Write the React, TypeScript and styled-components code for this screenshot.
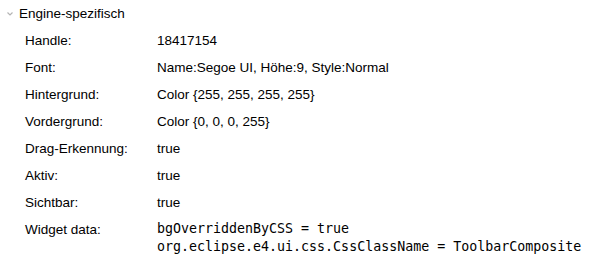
import React from 'react'
import styled, { createGlobalStyle } from 'styled-components'

const GlobalStyle = createGlobalStyle`
  html, body {
    margin: 0;
    padding: 0;
    background: #ffffff;
  }
  body {
    font-family: "Liberation Sans", Arial, sans-serif;
    font-size: 13.5px;
    color: #000000;
  }
`

const Section = styled.div`
  width: 590px;
  height: 263px;
  overflow: hidden;
`

const Header = styled.div`
  display: flex;
  align-items: center;
  height: 27px;
  padding-left: 7px;
  gap: 6px;
`

const Chevron = styled.svg`
  width: 6px;
  height: 4px;
  margin-top: 1px;
`

const Title = styled.span`
  line-height: 27px;
`

const Table = styled.div`
  display: grid;
  grid-template-columns: 132px 1fr;
  grid-auto-rows: minmax(27px, auto);
  padding-left: 25px;
`

const Label = styled.div`
  line-height: 27px;
`

const Value = styled.div<{ $mono?: boolean }>`
  line-height: 27px;
  ${(p) =>
    p.$mono &&
    `
    font-family: "DejaVu Sans Mono", "Liberation Mono", monospace;
    font-size: 13.3px;
    line-height: 18px;
    padding-top: 4px;
    white-space: pre;
  `}
`

const rows: [string, string][] = [
  ['Handle:', '18417154'],
  ['Font:', 'Name:Segoe UI, Höhe:9, Style:Normal'],
  ['Hintergrund:', 'Color {255, 255, 255, 255}'],
  ['Vordergrund:', 'Color {0, 0, 0, 255}'],
  ['Drag-Erkennung:', 'true'],
  ['Aktiv:', 'true'],
  ['Sichtbar:', 'true'],
]

export default function App() {
  return (
    <>
      <GlobalStyle />
      <Section>
        <Header>
          <Chevron viewBox="0 0 6 4">
            <path d="M0.5 0.5 L3 3 L5.5 0.5" fill="none" stroke="#b4b4b4" strokeWidth="1.2" />
          </Chevron>
          <Title>Engine-spezifisch</Title>
        </Header>
        <Table>
          {rows.map(([label, value]) => (
            <React.Fragment key={label}>
              <Label>{label}</Label>
              <Value>{value}</Value>
            </React.Fragment>
          ))}
          <Label>Widget data:</Label>
          <Value $mono>
            {'bgOverriddenByCSS = true\norg.eclipse.e4.ui.css.CssClassName = ToolbarComposite'}
          </Value>
        </Table>
      </Section>
    </>
  )
}
